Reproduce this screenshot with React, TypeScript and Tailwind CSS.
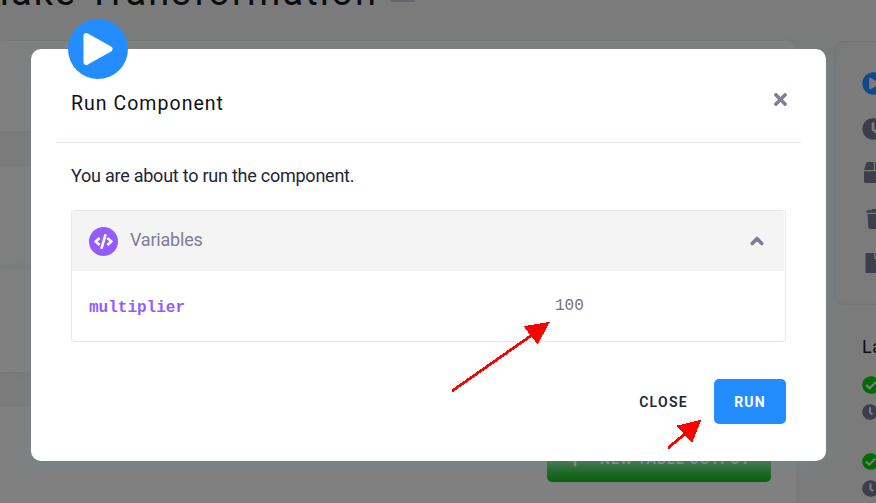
import { FaBox, FaCheckCircle, FaChevronUp, FaClock, FaCode, FaFile, FaPlayCircle, FaPlus, FaTimes, FaTrash } from "react-icons/fa";

function Backdrop() {
  return (
    <div className="flex h-full w-[1100px] bg-[#7b7b7b]">
      <div className="flex w-[796px] shrink-0 flex-col">
        <header className="flex h-[41px] items-start">
          <div className="flex w-[378px] shrink-0 justify-end">
            <h1 className="-mt-[33px] whitespace-nowrap text-[38px] leading-[50px] tracking-[2.1px] text-[#0b0c0e]">
              Snowflake Transformation
            </h1>
          </div>
          <span className="ml-[12px] h-[2px] w-[25px] rounded-b-sm bg-[#65656d]" />
        </header>
        <section className="h-[90px] shrink-0 rounded-r-[10px] bg-[#808080] shadow-[0_1px_5px_#747777]" />
        <section className="mt-[35px] h-[100px] shrink-0 bg-[#808080] shadow-[0_1px_4px_#777979]" />
        <section className="h-[106px] shrink-0 bg-[#808080] shadow-[0_1px_5px_#747777,inset_0_4px_5px_-3px_#777979]" />
        <section className="mt-[35px] flex grow justify-end bg-[#808080] pr-[25px] pt-[30px]">
          <div className="flex h-[45px] w-[224px] items-center rounded-[5px] bg-linear-to-b from-[#19741f] to-[#07600d] pl-[21px] text-[14px] font-bold tracking-[1.1px] text-[#8c918c]">
            <FaPlus className="mr-[18px] size-[14px] shrink-0" />
            <span className="whitespace-nowrap">NEW TABLE OUTPUT</span>
          </div>
        </section>
      </div>
      <aside className="ml-[38px] flex w-[260px] flex-col pt-[41px] text-[#3e3d4c]">
        <div className="flex h-[264px] flex-col rounded-[10px] border border-[#727679] pl-[27px] shadow-[inset_0_0_5px_#767979]">
          <FaPlayCircle className="mt-[30px] size-[23px] text-[#11498a]" />
          <FaClock className="mt-[23px] size-[22px]" />
          <FaBox className="mt-[22px] ml-[2px] size-[21px]" />
          <FaTrash className="mt-[26px] ml-[3px] size-[20px]" />
          <FaFile className="mt-[24px] ml-[1px] size-[20px]" />
        </div>
        <div className="pl-[28px]">
          <h2 className="mt-[30px] text-[18px] leading-[24px] tracking-[0.5px] text-[#101112]">Last runs</h2>
          <FaCheckCircle className="mt-[17px] size-[18px] text-[#006b00]" />
          <FaClock className="mt-[10px] size-[16px]" />
          <FaCheckCircle className="mt-[33px] size-[17px] text-[#006b00]" />
          <FaClock className="mt-[10px] size-[17px]" />
        </div>
      </aside>
    </div>
  );
}

function RunBadge() {
  return (
    <div className="absolute top-[-30px] left-[37px] flex size-[60px] items-center justify-center rounded-full bg-[#238dff]">
      <svg viewBox="0 0 60 60" className="size-[60px]" fill="#fff" stroke="#fff" strokeWidth="6" strokeLinejoin="round">
        <path d="M18.5 17 L41.5 30 L18.5 43 Z" />
      </svg>
    </div>
  );
}

function Variables() {
  return (
    <div className="mx-[15px] mt-[21px] h-[132px] rounded-[4px] border border-[#e2e6f0] pr-px">
      <div className="flex h-[60px] items-center rounded-t-[3px] bg-[#f4f4f4] pr-[20px] pl-[17px]">
        <span className="flex size-[29px] items-center justify-center rounded-full bg-[#925cff] text-white">
          <FaCode className="size-[19px]" />
        </span>
        <span className="-mt-[2px] ml-[12px] grow text-[18px] leading-[24px] tracking-[-0.2px] text-[#7f7d98]">Variables</span>
        <FaChevronUp className="size-[14px] stroke-[50px] text-[#7f7d98]" />
      </div>
      <div className="flex h-[70px] items-center pl-[17px] font-['Liberation_Mono',monospace] text-[16px]">
        <span className="mt-[3px] w-[466px] font-bold text-[#925cff]">multiplier</span>
        <span className="text-[#757575]">100</span>
      </div>
    </div>
  );
}

function Modal() {
  return (
    <div className="absolute top-[49px] left-[31px] h-[412px] w-[795px] rounded-[10px] bg-white px-[25px] shadow-[0_5px_22px_-3px_#758589]">
      <RunBadge />
      <div className="flex h-[94px] justify-between border-b border-[#e2e6f0] pr-[11px] pl-[15px]">
        <h2 className="mt-[42px] text-[19.5px] leading-[26px] tracking-[1.03px] text-[#101112]">Run Component</h2>
        <FaTimes className="mt-[41px] size-[19px] text-[#7f7d98]" />
      </div>
      <p className="mt-[20px] ml-[15px] text-[18px] leading-[26px] tracking-[-0.24px] text-[#22253a]">You are about to run the component.</p>
      <Variables />
      <div className="mt-[37px] mr-[15px] flex items-center justify-end text-[14px]">
        <button className="mt-px mr-[26px] font-semibold tracking-[1.3px] text-[#22253a]">CLOSE</button>
        <button className="h-[45px] w-[72px] rounded-[5px] bg-[#238dff] pt-px font-bold tracking-[1.2px] text-white">RUN</button>
      </div>
    </div>
  );
}

function Arrows() {
  return (
    <svg viewBox="0 0 876 503" className="absolute inset-0 h-[503px] w-[876px]" fill="red" stroke="red" shapeRendering="crispEdges">
      <path d="M452 391 L532 335 M668 448 L686 433" strokeWidth="2.8" />
      <path d="M549 322.5 L524.5 326.5 L537.5 343.5 Z M700.5 420.5 L677.5 426 L692 442 Z" strokeWidth="1" />
    </svg>
  );
}

export default function App() {
  return (
    <div className="relative h-[503px] w-[876px] overflow-hidden font-[Roboto,sans-serif]">
      <Backdrop />
      <Modal />
      <Arrows />
    </div>
  );
}
